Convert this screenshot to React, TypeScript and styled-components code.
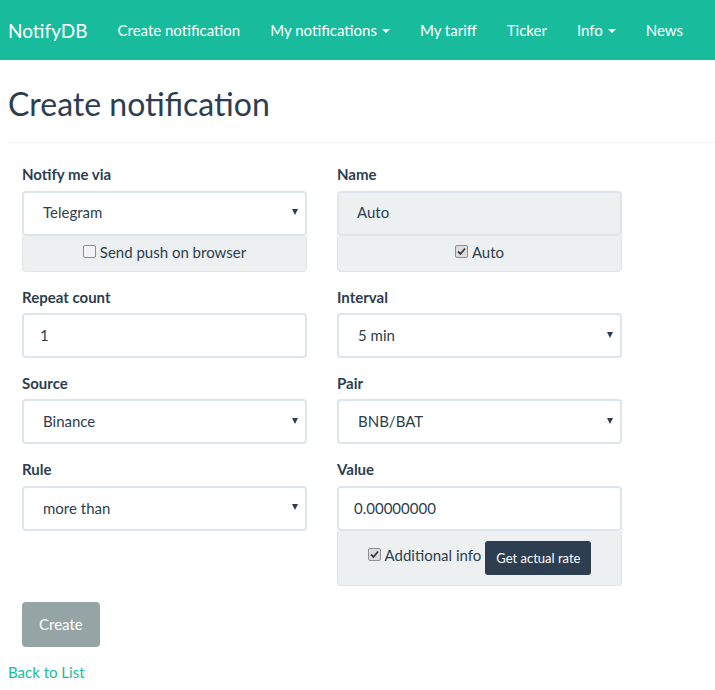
import React from "react";
import styled, { createGlobalStyle } from "styled-components";

const GlobalStyle = createGlobalStyle`
  html, body {
    margin: 0;
    padding: 0;
    background: #ffffff;
    font-family: Lato, "Helvetica Neue", Arial, sans-serif;
    font-size: 15px;
    line-height: 1.42857;
    color: #2c3e50;
  }
  * { box-sizing: border-box; }
`;

const Navbar = styled.nav`
  height: 60px;
  background: #18bc9c;
  display: flex;
  align-items: center;
  padding: 2px 0 0 8px;
`;

const Brand = styled.a`
  color: #ffffff;
  font-size: 19px;
  padding-right: 15px;
  text-decoration: none;
`;

const NavLink = styled.a`
  color: #ffffff;
  font-size: 15px;
  padding: 0 15px;
  text-decoration: none;
  display: flex;
  align-items: center;
  white-space: nowrap;
`;

const Caret = styled.span`
  display: inline-block;
  width: 0;
  height: 0;
  margin-left: 5px;
  border-top: 4px solid #ffffff;
  border-left: 4px solid transparent;
  border-right: 4px solid transparent;
`;

const Page = styled.div`
  padding: 0 0 20px 8px;
`;

const Title = styled.h2`
  font-size: 32px;
  font-weight: 400;
  line-height: 1.1;
  margin: 26px 0 0 0;
`;

const Rule = styled.hr`
  border: 0;
  border-top: 1px solid #ecf0f1;
  margin: 21px 0 21px 0;
`;

const Form = styled.div`
  padding-left: 14px;
  width: 614px;
`;

const Grid = styled.div`
  display: grid;
  grid-template-columns: 285px 285px;
  column-gap: 30px;
  align-items: start;
`;

const Group = styled.div`
  margin-bottom: 15px;
`;

const Label = styled.div`
  font-weight: 700;
  margin-bottom: 5px;
`;

const Field = styled.div<{ $disabled?: boolean; $pad?: number; $select?: boolean }>`
  height: 45px;
  border: 2px solid #dce4ec;
  border-radius: 4px;
  background: ${(p) => (p.$disabled ? "#ecf0f1" : "#ffffff")};
  padding: 0 ${(p) => (p.$select ? 7 : 11)}px 0 ${(p) => p.$pad ?? 15}px;
  display: flex;
  align-items: center;
  justify-content: space-between;
`;

const Arrow = styled.span`
  width: 0;
  height: 0;
  margin-top: -2px;
  border-top: 6px solid #2c3e50;
  border-left: 3.5px solid transparent;
  border-right: 3.5px solid transparent;
`;

const Addon = styled.div<{ $tall?: boolean }>`
  height: ${(p) => (p.$tall ? 55 : 36)}px;
  background: #ecf0f1;
  border: 1px solid #dce4ec;
  border-top: 0;
  border-radius: 0 0 4px 4px;
  display: flex;
  align-items: center;
  justify-content: center;
  gap: 2px;
  padding-bottom: ${(p) => (p.$tall ? 4 : 0)}px;
`;

const Check = styled.span<{ $on?: boolean }>`
  width: 13px;
  height: 13px;
  border: 1px solid #8f8f8f;
  border-radius: 2px;
  background: ${(p) => (p.$on ? "#dcdcdc" : "#f4f4f4")};
  display: inline-flex;
  align-items: center;
  justify-content: center;
  margin-right: 2px;
  margin-top: -3px;
`;

const RateButton = styled.span`
  background: #2c3e50;
  color: #ffffff;
  font-size: 13px;
  border-radius: 3px;
  padding: 8px 11px;
  margin-left: 2px;
  margin-top: 4px;
  line-height: 1.4;
`;

const CreateButton = styled.button`
  height: 45px;
  padding: 0 17px;
  border: 0;
  border-radius: 4px;
  background: #95a5a6;
  color: #ffffff;
  font-family: inherit;
  font-size: 15px;
  margin: 1px 0 15px 0;
`;

const BackLink = styled.a`
  color: #18bc9c;
  text-decoration: none;
  display: block;
`;

function Tick({ on }: { on?: boolean }) {
  return (
    <Check $on={on}>
      {on && (
        <svg width="9" height="9" viewBox="0 0 9 9">
          <path d="M1 4.5 L3.5 7 L8 1.5" stroke="#3a3a3a" strokeWidth="1.8" fill="none" />
        </svg>
      )}
    </Check>
  );
}

function Select({ value, pad }: { value: string; pad?: number }) {
  return (
    <Field $select $pad={pad ?? 19}>
      <span>{value}</span>
      <Arrow />
    </Field>
  );
}

export default function App() {
  return (
    <>
      <GlobalStyle />
      <Navbar>
        <Brand>NotifyDB</Brand>
        <NavLink>Create notification</NavLink>
        <NavLink>
          My notifications <Caret />
        </NavLink>
        <NavLink>My tariff</NavLink>
        <NavLink>Ticker</NavLink>
        <NavLink>
          Info <Caret />
        </NavLink>
        <NavLink>News</NavLink>
      </Navbar>
      <Page>
        <Title>Create notification</Title>
        <Rule />
        <Form>
          <Grid>
            <Group>
              <Label>Notify me via</Label>
              <Select value="Telegram" />
              <Addon>
                <Tick />
                Send push on browser
              </Addon>
            </Group>
            <Group>
              <Label>Name</Label>
              <Field $disabled $pad={18}>
                Auto
              </Field>
              <Addon>
                <Tick on />
                Auto
              </Addon>
            </Group>
            <Group>
              <Label>Repeat count</Label>
              <Field $pad={16}>1</Field>
            </Group>
            <Group>
              <Label>Interval</Label>
              <Select value="5 min" />
            </Group>
            <Group>
              <Label>Source</Label>
              <Select value="Binance" />
            </Group>
            <Group>
              <Label>Pair</Label>
              <Select value="BNB/BAT" />
            </Group>
            <Group>
              <Label>Rule</Label>
              <Select value="more than" />
            </Group>
            <Group>
              <Label>Value</Label>
              <Field $pad={15}>0.00000000</Field>
              <Addon $tall>
                <Tick on />
                Additional info
                <RateButton>Get actual rate</RateButton>
              </Addon>
            </Group>
          </Grid>
          <CreateButton>Create</CreateButton>
        </Form>
        <BackLink>Back to List</BackLink>
      </Page>
    </>
  );
}
